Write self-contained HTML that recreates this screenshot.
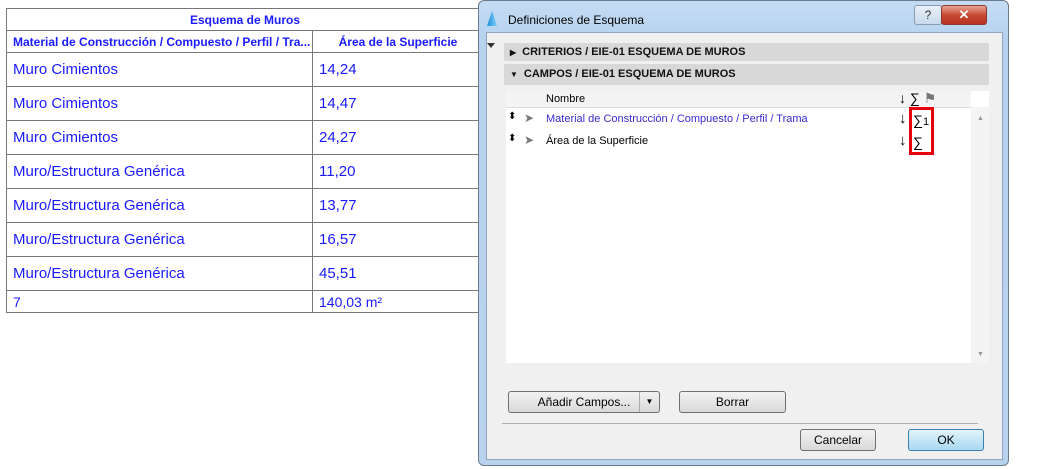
<!DOCTYPE html><html><head><style>
body{margin:0;width:1051px;height:469px;background:#fff;position:relative;overflow:hidden;font-family:"Liberation Sans",sans-serif}
.a{position:absolute}
table{position:absolute;left:6px;top:8px;border-collapse:collapse;color:#1a1aff;table-layout:fixed;width:477px}
td{border:1px solid #777;padding:0 6px;height:33px;font-size:15px;white-space:nowrap;overflow:hidden}
.t td{height:21px;font-size:12px;font-weight:bold;text-align:center}
.dlg{left:478px;top:0;width:529px;height:464px;border:1px solid #6b7b8c;border-radius:6px;background:linear-gradient(#c4dcf3,#b6d2ef 40px,#b9d3ee);font-family:"Liberation Sans",sans-serif}
.in{left:7px;top:31px;width:515px;height:426px;background:#f0f0f0;border:1px solid #8ea5bd}
.bar{left:17px;width:485px;height:18px;background:#d8d8d8;font-size:11px;font-weight:bold;color:#111;line-height:18px;border-radius:2px}
.btn{border:1px solid #707070;border-radius:3px;background:linear-gradient(#f2f2f2,#e6e6e6 50%,#d8d8d8);font-size:12px;text-align:center;line-height:20px;color:#000}
.sm{font-size:12px;color:#000}
</style></head><body>
<table>
<colgroup><col style="width:306px"><col style="width:171px"></colgroup>
<tr class="t"><td colspan="2">Esquema de Muros</td></tr>
<tr class="t"><td style="text-align:left;padding-left:6px">Material de Construcción / Compuesto / Perfil / Tra...</td><td>Área de la Superficie</td></tr>
<tr><td>Muro Cimientos</td><td>14,24</td></tr>
<tr><td>Muro Cimientos</td><td>14,47</td></tr>
<tr><td>Muro Cimientos</td><td>24,27</td></tr>
<tr><td>Muro/Estructura Genérica</td><td>11,20</td></tr>
<tr><td>Muro/Estructura Genérica</td><td>13,77</td></tr>
<tr><td>Muro/Estructura Genérica</td><td>16,57</td></tr>
<tr><td>Muro/Estructura Genérica</td><td>45,51</td></tr>
<tr><td style="height:21px;font-size:14px">7</td><td style="height:21px;font-size:14px">140,03 m²</td></tr>
</table>
<div class="a dlg">
 <div class="a" style="left:8px;top:10px;width:10px;height:15px;background:linear-gradient(90deg,#1b8fd6,#7fd0ff);clip-path:polygon(50% 0,100% 100%,0 100%)"></div>
 <div class="a sm" style="left:29px;top:12px;font-size:12px">Definiciones de Esquema</div>
 <div class="a" style="left:435px;top:4px;width:26px;height:18px;border:1px solid #8a9bb0;border-radius:3px;background:linear-gradient(#e9f1fa,#c9d9ec);font-size:12px;text-align:center;line-height:18px;color:#333">?</div>
 <div class="a" style="left:462px;top:4px;width:44px;height:18px;border:1px solid #8a3b30;border-radius:3px;background:linear-gradient(#e8a494,#c74a34 50%,#b83220);color:#fff;font-weight:bold;text-align:center;line-height:18px;font-size:13px">✕</div>
 <div class="a in">
  <div class="a" style="left:0;top:10px;width:0;height:0;border:4px solid transparent;border-top:5px solid #333"></div>
  <div class="a bar" style="top:10px"><span style="font-size:8px;margin:0 6px 0 6px">▶</span>CRITERIOS / EIE-01 ESQUEMA DE MUROS</div>
  <div class="a bar" style="top:31px;height:21px;line-height:21px"><span style="font-size:8px;margin:0 6px 0 6px">▼</span>CAMPOS / EIE-01 ESQUEMA DE MUROS</div>
  <div class="a" style="left:19px;top:58px;width:483px;height:272px;background:#fff"></div>
  <div class="a" style="left:19px;top:58px;width:465px;height:16px;background:#f4f4f4;border-bottom:1px solid #ddd"></div>
  <div class="a sm" style="left:59px;top:60px;font-size:11px">Nombre</div>
  <div class="a sm" style="left:412px;top:57px;font-size:14px">↓ ∑ <span style="color:#777">⚑</span></div>
  <div class="a" style="left:484px;top:74px;width:18px;height:256px;background:#f4f4f4"></div>
  <div class="a" style="left:490px;top:82px;font-size:7px;color:#999">▲</div>
  <div class="a" style="left:490px;top:318px;font-size:7px;color:#999">▼</div>
  <div class="a sm" style="left:21px;top:78px;font-size:10px">⬍</div><div class="a" style="left:37px;top:78px;font-size:12px;color:#777">➤</div>
  <div class="a" style="left:59px;top:80px;font-size:11px;color:#3a2bd0">Material de Construcción / Compuesto / Perfil / Trama</div>
  <div class="a sm" style="left:21px;top:100px;font-size:10px">⬍</div><div class="a" style="left:37px;top:100px;font-size:12px;color:#777">➤</div>
  <div class="a sm" style="left:59px;top:102px;font-size:11px">Área de la Superficie</div>
  <div class="a sm" style="left:412px;top:77px;font-size:15px">↓</div>
  <div class="a sm" style="left:412px;top:99px;font-size:15px">↓</div>
  <div class="a" style="left:422px;top:74px;width:25px;height:48px;border:3px solid #e8000b;box-sizing:border-box"></div>
  <div class="a sm" style="left:426px;top:79px;font-size:14px">∑<span style="font-size:11px">1</span></div>
  <div class="a sm" style="left:426px;top:101px;font-size:14px">∑</div>
  <div class="a btn" style="left:21px;top:358px;width:150px;height:20px">Añadir Campos...<span style="position:absolute;left:130px;top:0;width:19px;height:20px;border-left:1px solid #aaa;font-size:8px">▼</span></div>
  <div class="a btn" style="left:192px;top:358px;width:105px;height:20px">Borrar</div>
  <div class="a" style="left:15px;top:390px;width:476px;border-top:1px solid #b0b0b0"></div>
  <div class="a btn" style="left:313px;top:396px;width:74px;height:20px">Cancelar</div>
  <div class="a btn" style="left:421px;top:396px;width:74px;height:20px;border-color:#3c7fb1;background:linear-gradient(#e5f4fc,#c4e5f6 50%,#a9d9f2)">OK</div>
 </div>
</div>
</body></html>
